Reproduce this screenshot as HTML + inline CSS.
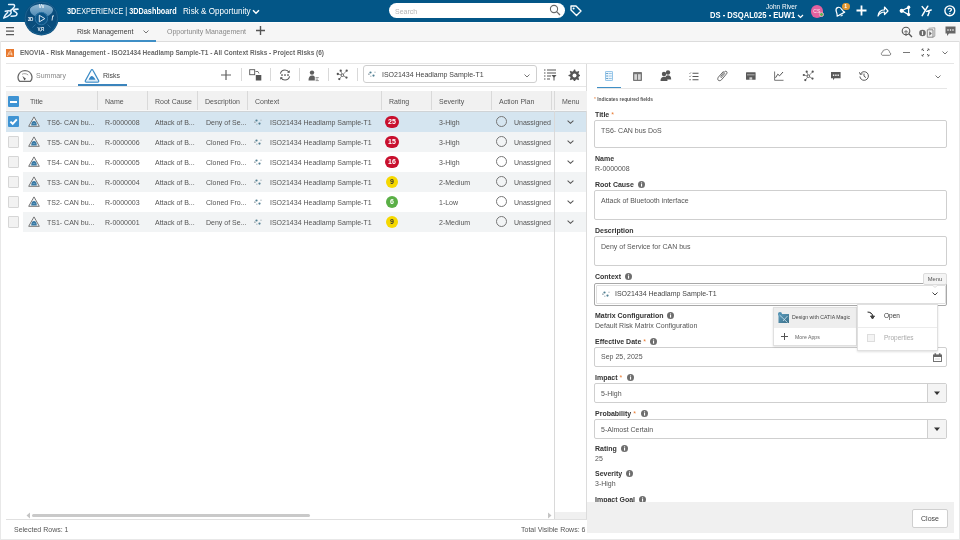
<!DOCTYPE html>
<html><head><meta charset="utf-8">
<style>
*{box-sizing:border-box;margin:0;padding:0}
html,body{width:960px;height:540px;overflow:hidden;background:#fff;}
body{will-change:transform;font-family:"Liberation Sans",sans-serif;color:#3d3d3d}
.a{position:absolute}
#top{left:0;top:0;width:960px;height:22px;background:#035687}
#bar2{left:0;top:22px;width:960px;height:20px;background:#f6f6f6;border-bottom:1px solid #dcdcdc}
.wt{color:#fff;white-space:nowrap}
.hdr{left:6px;top:91px;width:581px;height:20px;background:#f1f1f1}
.col{position:absolute;top:0;height:20px;border-left:1px solid #d9d9d9}
.ht{position:absolute;top:6px;font-size:7px;color:#555;white-space:nowrap}
.row{position:absolute;left:6px;width:549px;height:20px}
.ct{position:absolute;font-size:7px;color:#555;white-space:nowrap}
.lbl{position:absolute;left:595px;font-size:7px;font-weight:bold;color:#333;white-space:nowrap}
.val{position:absolute;left:595px;font-size:7px;color:#555;white-space:nowrap}
.box{position:absolute;left:594px;width:353px;border:1px solid #cfcfcf;border-radius:2px;background:#fff}
.bt{position:absolute;left:6px;font-size:7px;color:#555;white-space:nowrap}
.ic{position:absolute}
</style></head><body>
<!-- TOP BAR -->
<div id="top" class="a">
 <svg class="ic" style="left:0px;top:0px" width="22" height="22" viewBox="0 0 22 22">
  <path d="M8.6 4.6 L13.4 4.6 Q15.3 5.1 14.1 7.1 Q12.6 9.2 10.6 10.5" stroke="#e8f4ff" stroke-width="1.5" fill="none" stroke-linecap="round"/>
  <path d="M5.3 11.2 Q8.5 10.4 10.9 11.1 Q11.9 12.6 10.1 14.5 Q7.2 17.2 3.7 18.1 Q4.6 15.2 7.7 12.2" stroke="#e8f4ff" stroke-width="1.5" fill="none" stroke-linecap="round" stroke-linejoin="round"/>
  <path d="M12.4 9.1 L18.3 9.1" stroke="#e8f4ff" stroke-width="1.2" fill="none" stroke-linecap="round"/>
  <path d="M17.6 9.2 Q13.2 9.6 13.6 10.9 Q16.6 12.4 17 13.6 Q17.1 15.9 14.4 16.1 L11.1 16.3" stroke="#e8f4ff" stroke-width="1.5" fill="none" stroke-linecap="round" stroke-linejoin="round"/>
 </svg>
 <div class="a wt" style="left:67px;top:6.6px;font-size:8.2px;transform:scaleX(0.89);transform-origin:0 0"><b>3D</b>EXPERIENCE | <b>3DDashboard</b></div>
 <div class="a wt" style="left:183px;top:6.6px;font-size:8.2px;transform:scaleX(0.99);transform-origin:0 0">Risk &amp; Opportunity</div>
 <svg class="ic" style="left:252px;top:8.5px" width="8" height="6" viewBox="0 0 8 6"><path d="M1 1.2 L4 4.2 L7 1.2" stroke="#fff" stroke-width="1.5" fill="none"/></svg>
 <div class="a" style="left:389px;top:3px;width:176px;height:15px;border-radius:8px;background:#fff"></div>
 <div class="a" style="left:395px;top:7.5px;font-size:7px;color:#b5b5b5">Search</div>
 <svg class="ic" style="left:549px;top:4px" width="12" height="12" viewBox="0 0 12 12"><circle cx="5" cy="5" r="3.6" stroke="#6a6a6a" stroke-width="1.1" fill="none"/><path d="M7.6 7.6 L11 11" stroke="#6a6a6a" stroke-width="1.3"/></svg>
 <svg class="ic" style="left:569px;top:4px" width="13" height="13" viewBox="0 0 13 13"><path d="M2 2 L7 2 L12 7 L7.5 11.5 L2 6 Z" stroke="#fff" stroke-width="1.4" fill="none" stroke-linejoin="round"/><circle cx="4.6" cy="4.6" r="1" fill="#fff"/></svg>
 <div class="a wt" style="left:766px;top:2.5px;font-size:7px;transform:scaleX(0.93);transform-origin:0 0">John River</div>
 <div class="a wt" style="left:710px;top:10px;font-size:8.3px;font-weight:bold;transform:scaleX(0.915);transform-origin:0 0">DS - DSQAL025 - EUW1</div>
 <svg class="ic" style="left:797px;top:14px" width="7" height="5" viewBox="0 0 7 5"><path d="M1 1 L3.5 3.5 L6 1" stroke="#fff" stroke-width="1.2" fill="none"/></svg>
 <div class="a" style="left:810.5px;top:5px;width:12.5px;height:12.5px;border-radius:50%;background:#e3619f"></div>
 <div class="a" style="left:810.5px;top:8.3px;width:12.5px;font-size:5px;color:#fce6f0;text-align:center">CS</div>
 <div class="a" style="left:818.5px;top:12px;width:5px;height:5px;border-radius:50%;background:#5cb84f;border:0.8px solid #f2a0c8"></div>
 <svg class="ic" style="left:833px;top:5px" width="13" height="13" viewBox="0 0 13 13"><g transform="rotate(-28 6.5 6.5)"><path d="M2.2 9.5 L10.8 9.5 C9.8 8.6 9.6 6.8 9.4 5.2 C9.1 3.2 7.9 2.1 6.5 2.1 C5.1 2.1 3.9 3.2 3.6 5.2 C3.4 6.8 3.2 8.6 2.2 9.5 Z" stroke="#fff" stroke-width="1.2" fill="none" stroke-linejoin="round"/><path d="M5.4 10.6 Q6.5 11.9 7.6 10.6" stroke="#fff" stroke-width="1.1" fill="none"/></g></svg>
 <div class="a" style="left:842px;top:2.5px;width:7.5px;height:7.5px;border-radius:50%;background:#e0962f"></div>
 <div class="a" style="left:842px;top:3px;width:7.5px;font-size:5px;color:#fff;text-align:center;font-weight:bold">1</div>
 <svg class="ic" style="left:856px;top:5px" width="11" height="11" viewBox="0 0 11 11"><path d="M5.5 0.5 V10.5 M0.5 5.5 H10.5" stroke="#fff" stroke-width="1.8"/></svg>
 <svg class="ic" style="left:877px;top:5px" width="12" height="12" viewBox="0 0 12 12"><path d="M1 11 C1.5 6.5 4 4.8 7.5 4.8 V2 L11 6 L7.5 9.5 V7 C4.8 7 2.8 8 1 11 Z" stroke="#fff" stroke-width="1.2" fill="none" stroke-linejoin="round"/></svg>
 <svg class="ic" style="left:899px;top:5px" width="12" height="12" viewBox="0 0 12 12"><path d="M9.6 2.2 L2.8 5.8 L9.6 9.6 Z" stroke="#fff" stroke-width="1.3" fill="none" stroke-linejoin="round"/><circle cx="9.7" cy="2.2" r="1.6" fill="#fff"/><circle cx="2.7" cy="5.8" r="2.1" fill="#fff"/><circle cx="9.7" cy="9.6" r="1.6" fill="#fff"/></svg>
 <svg class="ic" style="left:921px;top:4px" width="12" height="13" viewBox="0 0 12 13"><path d="M1.2 2.6 L4.2 6.3 M6.8 2.2 L1.2 11.6 M8.8 6.6 L6.9 11.6 M5.6 7.4 L10.2 6" stroke="#fff" stroke-width="1.5" fill="none" stroke-linecap="round"/></svg>
 <svg class="ic" style="left:943.5px;top:5px" width="12" height="12" viewBox="0 0 12 12"><circle cx="5.8" cy="5.8" r="4.9" stroke="#fff" stroke-width="1.4" fill="none"/><path d="M4.1 4.6 C4.1 3 7.5 3 7.5 4.6 C7.5 5.8 5.8 5.8 5.8 7.1" stroke="#fff" stroke-width="1.3" fill="none"/><circle cx="5.8" cy="8.7" r="0.8" fill="#fff"/></svg>
</div>
<!-- BAR 2 -->
<div id="bar2" class="a">
 <div class="a" style="left:0;top:0;width:960px;height:1px;background:#fdfdfd"></div>
 <svg class="ic" style="left:6px;top:5px" width="8" height="9" viewBox="0 0 8 9"><path d="M0 0.6 H8 M0 4.1 H8 M0 7.6 H8" stroke="#595959" stroke-width="1.2"/></svg>
 <div class="a" style="left:77px;top:6px;font-size:7px;color:#3d3d3d">Risk Management</div>
 <svg class="ic" style="left:143px;top:8px" width="6" height="4" viewBox="0 0 6 4"><path d="M0.5 0.5 L3 3 L5.5 0.5" stroke="#666" stroke-width="0.9" fill="none"/></svg>
 <div class="a" style="left:70px;top:18px;width:86px;height:2px;background:#3f8fc6"></div>
 <div class="a" style="left:167px;top:6px;font-size:7px;color:#888">Opportunity Management</div>
 <svg class="ic" style="left:256px;top:4px" width="9" height="9" viewBox="0 0 9 9"><path d="M4.5 0 V9 M0 4.5 H9" stroke="#555" stroke-width="1.4"/></svg>
 <svg class="ic" style="left:901px;top:4px" width="12" height="12" viewBox="0 0 12 12"><circle cx="5" cy="5" r="3.8" stroke="#555" stroke-width="1.1" fill="none"/><path d="M7.8 7.8 L11 11" stroke="#555" stroke-width="1.3"/><path d="M3 6.5 L5 4.5 L7 6.5 M5 5 V10" stroke="#555" stroke-width="0.9" fill="none"/></svg>
 <svg class="ic" style="left:919px;top:5px" width="18" height="12" viewBox="0 0 18 12"><circle cx="3.5" cy="6" r="3.3" fill="#6a6a6a"/><rect x="2.9" y="4" width="1.2" height="4" rx="0.6" fill="#f6f6f6"/><path d="M8.3 2.8 H14 V10.2 H8.3 Z" stroke="#7a7a7a" stroke-width="0.9" fill="#f0f0f0"/><path d="M9.5 1.3 L15.8 0.8 V9.2 L14 10.2" stroke="#8a8a8a" stroke-width="0.8" fill="none"/><path d="M10.3 4.3 L12.8 6.5 L10.3 8.7 Z" fill="#666"/></svg>
 <svg class="ic" style="left:945px;top:4px" width="11" height="11" viewBox="0 0 11 11"><path d="M0.5 0.5 H10.5 V7.5 H4 L2 10 V7.5 H0.5 Z" fill="#666"/><circle cx="3" cy="4" r="0.8" fill="#fff"/><circle cx="5.5" cy="4" r="0.8" fill="#fff"/><circle cx="8" cy="4" r="0.8" fill="#fff"/></svg>
</div>
<!-- COMPASS -->
<svg class="ic" style="left:23px;top:0px" width="38" height="38" viewBox="0 0 38 38">
 <defs><linearGradient id="cg" x1="0" y1="0" x2="0" y2="1"><stop offset="0" stop-color="#a9cbe2"/><stop offset="1" stop-color="#5d97c0"/></linearGradient></defs>
 <circle cx="18.4" cy="18.3" r="17.1" fill="#0a4d7c"/>
 <circle cx="18.4" cy="18.3" r="16.3" fill="none" stroke="#1d6593" stroke-width="0.9"/>
 <path d="M7 9 C9 2.5 28 2.5 30 9 C30.5 12 27 15.5 24.5 16 C23 13.5 21 12.3 18.4 12.3 C15.8 12.3 13.8 13.5 12.3 16 C9.5 15.5 6.5 12 7 9 Z" fill="url(#cg)" opacity="0.85"/>
 <circle cx="18.4" cy="18.6" r="6.2" fill="#0b5487" stroke="#2f77a8" stroke-width="1"/>
 <path d="M16.3 15.3 L21.8 18.6 L16.3 21.9 Z" stroke="#dbe9f4" stroke-width="1" fill="none" stroke-linejoin="round"/>
 <text x="4.8" y="20.6" font-size="4.6" font-weight="bold" fill="#e6eef5" font-family="Liberation Sans" letter-spacing="-0.3">3D</text>
 <text x="14.6" y="30.6" font-size="4.6" font-weight="bold" fill="#e6eef5" font-family="Liberation Sans" letter-spacing="-0.3">V,R</text>
 <text x="15.8" y="8.2" font-size="4.6" font-weight="bold" fill="#f2f7fb" font-family="Liberation Sans" font-style="italic">Vs</text>
 <path d="M29.8 15.5 L29 20.5 M29.5 16.5 L31 15.6" stroke="#e6eef5" stroke-width="0.9"/>
 <path d="M9.5 27.5 L12.5 24.5 M27.5 27.5 L24.5 24.5" stroke="#3f80ad" stroke-width="0.7"/>
</svg>

<!-- FRAME -->
<div class="a" style="left:0;top:41px;width:960px;height:499px;border:1px solid #e8e8e8;border-top:none"></div>
<div class="a" style="left:6px;top:49px;width:8px;height:8px;background:#e8792f"></div>
<svg class="ic" style="left:6px;top:49px" width="8" height="8" viewBox="0 0 8 8"><path d="M1.5 7 L3.5 2.5 M3 5 H6.5 M4.5 1.5 L6 6.5" stroke="#fde3cc" stroke-width="0.8" fill="none"/></svg>
<div class="a" style="left:20px;top:49px;font-size:6.5px;font-weight:bold;color:#686868;white-space:nowrap">ENOVIA - Risk Management - ISO21434 Headlamp Sample-T1 - All Context Risks - Project Risks (6)</div>
<svg class="ic" style="left:880px;top:48px" width="12" height="8" viewBox="0 0 12 8"><path d="M2.5 7.3 H9.5 C11 7.3 11.3 4.8 9.6 4.5 C9.5 2 6.8 0.5 5 2 C4 1.6 2.6 2.5 2.9 3.8 C0.8 4.3 1 7.3 2.5 7.3 Z" stroke="#666" stroke-width="0.8" fill="none"/></svg>
<div class="a" style="left:903px;top:52px;width:7px;height:1.2px;background:#777"></div>
<svg class="ic" style="left:921px;top:48px" width="9" height="9" viewBox="0 0 9 9"><path d="M1 1 L3 3 M8 1 L6 3 M1 8 L3 6 M8 8 L6 6" stroke="#666" stroke-width="1"/><path d="M1 1 h1.5 M1 1 v1.5 M8 1 h-1.5 M8 1 v1.5 M1 8 h1.5 M1 8 v-1.5 M8 8 h-1.5 M8 8 v-1.5" stroke="#666" stroke-width="0.9"/></svg>
<svg class="ic" style="left:942px;top:51px" width="6" height="4" viewBox="0 0 6 4"><path d="M0.5 0.5 L3 3 L5.5 0.5" stroke="#666" stroke-width="0.9" fill="none"/></svg>
<div class="a" style="left:6px;top:63px;width:948px;height:1px;background:#e6e6e6"></div>
<!-- LEFT TABS -->
<svg class="ic" style="left:17px;top:69px" width="16" height="14" viewBox="0 0 16 14"><path d="M2.6 12.3 C1.2 11 0.8 9.2 1.1 7.3 C1.7 3.9 4.6 1.6 8 1.6 C11.4 1.6 14.3 3.9 14.9 7.3 C15.2 9.2 14.8 11 13.4 12.3 Z" stroke="#6a6a6a" stroke-width="1.3" fill="none" stroke-linejoin="round"/><path d="M5 5.3 C6.6 4.3 9.4 4.4 11.2 6" stroke="#8a8a8a" stroke-width="0.8" fill="none"/><path d="M7.4 11.6 L5.4 6.9 L9 9.8 Z" fill="#555"/></svg>
<div class="a" style="left:36px;top:72px;font-size:7px;color:#888">Summary</div>
<svg class="ic" style="left:84px;top:68px" width="16" height="16" viewBox="0 0 16 16"><path d="M8 1.6 C8.4 1.6 8.7 1.8 8.9 2.2 L14.6 12.6 C15 13.4 14.6 14.2 13.7 14.2 H2.3 C1.4 14.2 1 13.4 1.4 12.6 L7.1 2.2 C7.3 1.8 7.6 1.6 8 1.6 Z" stroke="#3d8cc6" stroke-width="1.2" fill="#fbfdff"/><path d="M4.6 11.8 C5.3 10.3 6.3 8.3 7.6 8 C8.6 7.8 9.3 8.8 10 9.4 C10.6 9.9 11.2 10.6 11.5 11.8 Z" fill="#3584c2"/><path d="M2.6 12.9 H13.4" stroke="#a9cdea" stroke-width="0.7"/></svg>
<div class="a" style="left:103px;top:72px;font-size:7px;color:#444">Risks</div>
<div class="a" style="left:78px;top:84px;width:49px;height:2px;background:#3b84bc"></div>
<div class="a" style="left:6px;top:86px;width:581px;height:1px;background:#e6e6e6"></div>
<!-- TOOLBAR -->
<svg class="ic" style="left:221px;top:70px" width="10" height="10" viewBox="0 0 10 10"><path d="M5 0 V10 M0 5 H10" stroke="#606060" stroke-width="1.2"/></svg>
<div class="a" style="left:241px;top:68px;width:1px;height:13px;background:#d9d9d9"></div>
<svg class="ic" style="left:249px;top:69px" width="13" height="12" viewBox="0 0 13 12"><rect x="0.7" y="0.7" width="5" height="5" stroke="#555" stroke-width="0.9" fill="none"/><rect x="6.8" y="6" width="5.5" height="5.5" fill="#555"/><path d="M6.5 2.5 L9 2.5 L10 4.5" stroke="#555" stroke-width="0.8" fill="none"/></svg>
<div class="a" style="left:270px;top:68px;width:1px;height:13px;background:#d9d9d9"></div>
<svg class="ic" style="left:278.5px;top:69px" width="12" height="12" viewBox="0 0 12 12"><path d="M1.4 4.6 C2 2.4 3.9 1 6 1 C7.7 1 9.2 1.9 10 3.3" stroke="#5a5a5a" stroke-width="1.1" fill="none"/><path d="M10.6 7.4 C10 9.6 8.1 11 6 11 C4.3 11 2.8 10.1 2 8.7" stroke="#5a5a5a" stroke-width="1.1" fill="none"/><path d="M10.9 1.3 L10.6 4 L8.1 3.4 Z" fill="#5a5a5a"/><path d="M1.1 10.7 L1.4 8 L3.9 8.6 Z" fill="#5a5a5a"/><rect x="2.2" y="5.3" width="1.6" height="1.5" fill="#5a5a5a"/><rect x="5.2" y="5.3" width="1.6" height="1.5" fill="#5a5a5a"/><rect x="8.2" y="5.3" width="1.6" height="1.5" fill="#5a5a5a"/></svg>
<div class="a" style="left:299px;top:68px;width:1px;height:13px;background:#d9d9d9"></div>
<svg class="ic" style="left:307.5px;top:69.5px" width="12" height="12" viewBox="0 0 12 12"><circle cx="4" cy="2.6" r="2.2" fill="#5e5e5e"/><path d="M0.5 10.6 C0.5 7.3 1.8 5.6 4 5.6 C5.3 5.6 6.2 6.1 6.8 7 L6.8 10.6 Z" fill="#5e5e5e"/><path d="M7.6 7.6 H10.8 M7.6 9.1 H10 M7.6 10.6 H10.8" stroke="#7a7a7a" stroke-width="0.8"/></svg>
<div class="a" style="left:328px;top:68px;width:1px;height:13px;background:#d9d9d9"></div>
<svg class="ic" style="left:336px;top:69px" width="12" height="12" viewBox="0 0 12 12"><path d="M6.4 6.2 L4.7 1.7 M6.4 6.2 L10.7 1.7 M6.4 6.2 L1.8 5 M6.4 6.2 L3.3 10.1 M6.4 6.2 L10.5 8.6" stroke="#666" stroke-width="0.7"/><circle cx="4.7" cy="1.7" r="1.15" fill="#555"/><circle cx="10.7" cy="1.7" r="1.15" fill="#555"/><circle cx="1.8" cy="5" r="1.15" fill="#555"/><circle cx="3.3" cy="10.1" r="1.15" fill="#555"/><circle cx="10.5" cy="8.6" r="1.15" fill="#555"/><circle cx="6.4" cy="6.2" r="1.3" stroke="#555" stroke-width="0.9" fill="#fff"/></svg>
<div class="a" style="left:357px;top:68px;width:1px;height:13px;background:#d9d9d9"></div>
<div class="a" style="left:363px;top:65px;width:174px;height:18px;border:1px solid #cfcfcf;border-radius:3px;background:#fff"></div>
<svg class="ic" style="left:368px;top:70px" width="9" height="8" viewBox="0 0 9 8"><circle cx="2.5" cy="2.5" r="1.1" fill="#4f7f92"/><circle cx="5.5" cy="5.6" r="1.1" fill="#4f7f92"/><circle cx="0.9" cy="4.2" r="0.9" fill="#a9b4bb"/><circle cx="7" cy="2.3" r="0.8" fill="#b9c3c9"/><circle cx="2.8" cy="6.3" r="0.8" fill="#b9c3c9"/></svg>
<div class="a" style="left:382px;top:70.5px;font-size:7px;color:#444;white-space:nowrap">ISO21434 Headlamp Sample-T1</div>
<svg class="ic" style="left:524px;top:74px" width="6" height="4" viewBox="0 0 6 4"><path d="M0.5 0.5 L3 3 L5.5 0.5" stroke="#666" stroke-width="0.9" fill="none"/></svg>
<svg class="ic" style="left:544px;top:69px" width="13" height="12" viewBox="0 0 13 12"><path d="M0 1 H1.5 M3 1 H12 M0 4 H1.5 M3 4 H12 M0 7 H1.5 M3 7 H7 M0 10 H1.5 M3 10 H6" stroke="#555" stroke-width="1.1"/><path d="M7.5 6 H12.5 L10.5 8.5 V11.5 H9.5 V8.5 Z" fill="#555"/></svg>
<svg class="ic" style="left:568px;top:69px" width="12" height="12" viewBox="0 0 12 12"><path d="M6 0.5 L7.2 0.5 L7.6 2.2 L9 2.8 L10.5 1.9 L11.3 2.8 L10.4 4.3 L11 5.6 L12 6 L12 7 L10.9 7.4 L10.4 8.8 L11.2 10.2 L10.2 11.2 L8.8 10.3 L7.5 10.9 L7.1 12 L5.9 12 L5.5 10.9 L4.2 10.3 L2.8 11.2 L1.8 10.2 L2.6 8.8 L2.1 7.4 L0.5 7 L0.5 5.9 L2.1 5.5 L2.6 4.2 L1.7 2.8 L2.7 1.8 L4.1 2.7 L5.4 2.1 Z" fill="#555"/><circle cx="6.5" cy="6.5" r="2" fill="#fff"/></svg>
<div class="a" style="left:586px;top:64px;width:1px;height:455px;background:#dcdcdc"></div>

<!-- GRID HEADER -->
<div class="a hdr">
 <div class="col" style="left:91px"></div>
 <div class="col" style="left:141px"></div>
 <div class="col" style="left:191px"></div>
 <div class="col" style="left:241px"></div>
 <div class="col" style="left:375px"></div>
 <div class="col" style="left:425px"></div>
 <div class="col" style="left:485px"></div>
 <div class="col" style="left:545px"></div>
 <div class="col" style="left:548px"></div>
</div>
<div class="a" style="left:8px;top:96px;width:11px;height:11px;background:#3e93d3;border-radius:1px"></div>
<div class="a" style="left:10px;top:100.5px;width:7px;height:2px;background:#fff"></div>
<div class="a ht" style="top:98px;left:30px">Title</div>
<div class="a ht" style="top:98px;left:105px">Name</div>
<div class="a ht" style="top:98px;left:155px">Root Cause</div>
<div class="a ht" style="top:98px;left:205px">Description</div>
<div class="a ht" style="top:98px;left:255px">Context</div>
<div class="a ht" style="top:98px;left:389px">Rating</div>
<div class="a ht" style="top:98px;left:439px">Severity</div>
<div class="a ht" style="top:98px;left:499px">Action Plan</div>
<div class="a ht" style="top:98px;left:562px">Menu</div>
<!-- ROWS -->
<div class="a" style="left:6px;top:111px;width:580px;height:21px;background:#d5e5f0"></div>
<div class="a" style="left:6px;top:110px;width:580px;height:1px;background:#f7f7f7"></div>
<div class="a" style="left:6px;top:111px;width:580px;height:1px;background:#cfd3d6"></div>
<div class="a" style="left:8px;top:116px;width:11px;height:11px;background:#3e93d3;border-radius:1px"></div>
<svg class="ic" style="left:9px;top:117px" width="9" height="9" viewBox="0 0 9 9"><path d="M1.4 4.6 L3.7 6.8 L7.8 2.3" stroke="#fff" stroke-width="2" fill="none"/></svg>
<svg class="ic" style="left:28px;top:116px" width="12" height="11" viewBox="0 0 12 11"><path d="M6 0.9 L11.3 10.3 H0.7 Z" stroke="#747474" stroke-width="1" fill="#f4f6f8" stroke-linejoin="round"/><path d="M6 2.8 L9.6 9.2 H2.4 Z" stroke="#e2e6ea" stroke-width="0.5" fill="none"/><path d="M3.2 9.4 C3.2 6.6 4.5 5.1 6 5.1 C7.5 5.1 8.8 6.6 8.8 9.4 Z" fill="#3878a2"/><path d="M4.8 7.6 H7.2" stroke="#7fb3d3" stroke-width="0.6"/></svg>
<div class="a ct" style="left:47px;top:118.5px">TS6- CAN bu...</div>
<div class="a ct" style="left:105px;top:118.5px">R-0000008</div>
<div class="a ct" style="left:155px;top:118.5px">Attack of B...</div>
<div class="a ct" style="left:206px;top:118.5px">Deny of Se...</div>
<svg class="ic" style="left:254px;top:118px" width="9" height="8" viewBox="0 0 9 8"><circle cx="2.5" cy="2.5" r="1.1" fill="#4f7f92"/><circle cx="5.5" cy="5.6" r="1.1" fill="#4f7f92"/><circle cx="0.9" cy="4.2" r="0.9" fill="#a9b4bb"/><circle cx="7" cy="2.3" r="0.8" fill="#b9c3c9"/><circle cx="2.8" cy="6.3" r="0.8" fill="#b9c3c9"/></svg>
<div class="a ct" style="left:270px;top:118.5px">ISO21434 Headlamp Sample-T1</div>
<div class="a" style="left:385px;top:116px;width:14px;height:12px;border-radius:6px;background:#c8102e;color:#fff;font-size:7px;font-weight:bold;text-align:center;line-height:12px">25</div>
<div class="a ct" style="left:439px;top:118.5px">3-High</div>
<div class="a" style="left:496px;top:116px;width:11px;height:11px;border-radius:50%;border:1px solid #777"></div>
<div class="a ct" style="left:514px;top:118.5px">Unassigned</div>
<svg class="ic" style="left:567px;top:120px" width="7" height="4" viewBox="0 0 7 4"><path d="M0.6 0.6 L3.5 3.3 L6.4 0.6" stroke="#555" stroke-width="1.05" fill="none"/></svg>
<div class="a" style="left:23px;top:132px;width:563px;height:20px;background:#f2f4f5"></div>
<div class="a" style="left:8px;top:136px;width:11px;height:12px;background:#f2f2f2;border:1px solid #d6d6d6;border-radius:1px"></div>
<svg class="ic" style="left:28px;top:136px" width="12" height="11" viewBox="0 0 12 11"><path d="M6 0.9 L11.3 10.3 H0.7 Z" stroke="#747474" stroke-width="1" fill="#f4f6f8" stroke-linejoin="round"/><path d="M6 2.8 L9.6 9.2 H2.4 Z" stroke="#e2e6ea" stroke-width="0.5" fill="none"/><path d="M3.2 9.4 C3.2 6.6 4.5 5.1 6 5.1 C7.5 5.1 8.8 6.6 8.8 9.4 Z" fill="#3878a2"/><path d="M4.8 7.6 H7.2" stroke="#7fb3d3" stroke-width="0.6"/></svg>
<div class="a ct" style="left:47px;top:138.5px">TS5- CAN bu...</div>
<div class="a ct" style="left:105px;top:138.5px">R-0000006</div>
<div class="a ct" style="left:155px;top:138.5px">Attack of B...</div>
<div class="a ct" style="left:206px;top:138.5px">Cloned Fro...</div>
<svg class="ic" style="left:254px;top:138px" width="9" height="8" viewBox="0 0 9 8"><circle cx="2.5" cy="2.5" r="1.1" fill="#4f7f92"/><circle cx="5.5" cy="5.6" r="1.1" fill="#4f7f92"/><circle cx="0.9" cy="4.2" r="0.9" fill="#a9b4bb"/><circle cx="7" cy="2.3" r="0.8" fill="#b9c3c9"/><circle cx="2.8" cy="6.3" r="0.8" fill="#b9c3c9"/></svg>
<div class="a ct" style="left:270px;top:138.5px">ISO21434 Headlamp Sample-T1</div>
<div class="a" style="left:385px;top:136px;width:14px;height:12px;border-radius:6px;background:#c8102e;color:#fff;font-size:7px;font-weight:bold;text-align:center;line-height:12px">15</div>
<div class="a ct" style="left:439px;top:138.5px">3-High</div>
<div class="a" style="left:496px;top:136px;width:11px;height:11px;border-radius:50%;border:1px solid #777"></div>
<div class="a ct" style="left:514px;top:138.5px">Unassigned</div>
<svg class="ic" style="left:567px;top:140px" width="7" height="4" viewBox="0 0 7 4"><path d="M0.6 0.6 L3.5 3.3 L6.4 0.6" stroke="#555" stroke-width="1.05" fill="none"/></svg>
<div class="a" style="left:8px;top:156px;width:11px;height:12px;background:#f2f2f2;border:1px solid #d6d6d6;border-radius:1px"></div>
<svg class="ic" style="left:28px;top:156px" width="12" height="11" viewBox="0 0 12 11"><path d="M6 0.9 L11.3 10.3 H0.7 Z" stroke="#747474" stroke-width="1" fill="#f4f6f8" stroke-linejoin="round"/><path d="M6 2.8 L9.6 9.2 H2.4 Z" stroke="#e2e6ea" stroke-width="0.5" fill="none"/><path d="M3.2 9.4 C3.2 6.6 4.5 5.1 6 5.1 C7.5 5.1 8.8 6.6 8.8 9.4 Z" fill="#3878a2"/><path d="M4.8 7.6 H7.2" stroke="#7fb3d3" stroke-width="0.6"/></svg>
<div class="a ct" style="left:47px;top:158.5px">TS4- CAN bu...</div>
<div class="a ct" style="left:105px;top:158.5px">R-0000005</div>
<div class="a ct" style="left:155px;top:158.5px">Attack of B...</div>
<div class="a ct" style="left:206px;top:158.5px">Cloned Fro...</div>
<svg class="ic" style="left:254px;top:158px" width="9" height="8" viewBox="0 0 9 8"><circle cx="2.5" cy="2.5" r="1.1" fill="#4f7f92"/><circle cx="5.5" cy="5.6" r="1.1" fill="#4f7f92"/><circle cx="0.9" cy="4.2" r="0.9" fill="#a9b4bb"/><circle cx="7" cy="2.3" r="0.8" fill="#b9c3c9"/><circle cx="2.8" cy="6.3" r="0.8" fill="#b9c3c9"/></svg>
<div class="a ct" style="left:270px;top:158.5px">ISO21434 Headlamp Sample-T1</div>
<div class="a" style="left:385px;top:156px;width:14px;height:12px;border-radius:6px;background:#c8102e;color:#fff;font-size:7px;font-weight:bold;text-align:center;line-height:12px">16</div>
<div class="a ct" style="left:439px;top:158.5px">3-High</div>
<div class="a" style="left:496px;top:156px;width:11px;height:11px;border-radius:50%;border:1px solid #777"></div>
<div class="a ct" style="left:514px;top:158.5px">Unassigned</div>
<svg class="ic" style="left:567px;top:160px" width="7" height="4" viewBox="0 0 7 4"><path d="M0.6 0.6 L3.5 3.3 L6.4 0.6" stroke="#555" stroke-width="1.05" fill="none"/></svg>
<div class="a" style="left:23px;top:172px;width:563px;height:20px;background:#f2f4f5"></div>
<div class="a" style="left:8px;top:176px;width:11px;height:12px;background:#f2f2f2;border:1px solid #d6d6d6;border-radius:1px"></div>
<svg class="ic" style="left:28px;top:176px" width="12" height="11" viewBox="0 0 12 11"><path d="M6 0.9 L11.3 10.3 H0.7 Z" stroke="#747474" stroke-width="1" fill="#f4f6f8" stroke-linejoin="round"/><path d="M6 2.8 L9.6 9.2 H2.4 Z" stroke="#e2e6ea" stroke-width="0.5" fill="none"/><path d="M3.2 9.4 C3.2 6.6 4.5 5.1 6 5.1 C7.5 5.1 8.8 6.6 8.8 9.4 Z" fill="#3878a2"/><path d="M4.8 7.6 H7.2" stroke="#7fb3d3" stroke-width="0.6"/></svg>
<div class="a ct" style="left:47px;top:178.5px">TS3- CAN bu...</div>
<div class="a ct" style="left:105px;top:178.5px">R-0000004</div>
<div class="a ct" style="left:155px;top:178.5px">Attack of B...</div>
<div class="a ct" style="left:206px;top:178.5px">Cloned Fro...</div>
<svg class="ic" style="left:254px;top:178px" width="9" height="8" viewBox="0 0 9 8"><circle cx="2.5" cy="2.5" r="1.1" fill="#4f7f92"/><circle cx="5.5" cy="5.6" r="1.1" fill="#4f7f92"/><circle cx="0.9" cy="4.2" r="0.9" fill="#a9b4bb"/><circle cx="7" cy="2.3" r="0.8" fill="#b9c3c9"/><circle cx="2.8" cy="6.3" r="0.8" fill="#b9c3c9"/></svg>
<div class="a ct" style="left:270px;top:178.5px">ISO21434 Headlamp Sample-T1</div>
<div class="a" style="left:386px;top:176px;width:12px;height:12px;border-radius:6px;background:#f5d800;color:#333;font-size:7px;font-weight:bold;text-align:center;line-height:12px">9</div>
<div class="a ct" style="left:439px;top:178.5px">2-Medium</div>
<div class="a" style="left:496px;top:176px;width:11px;height:11px;border-radius:50%;border:1px solid #777"></div>
<div class="a ct" style="left:514px;top:178.5px">Unassigned</div>
<svg class="ic" style="left:567px;top:180px" width="7" height="4" viewBox="0 0 7 4"><path d="M0.6 0.6 L3.5 3.3 L6.4 0.6" stroke="#555" stroke-width="1.05" fill="none"/></svg>
<div class="a" style="left:8px;top:196px;width:11px;height:12px;background:#f2f2f2;border:1px solid #d6d6d6;border-radius:1px"></div>
<svg class="ic" style="left:28px;top:196px" width="12" height="11" viewBox="0 0 12 11"><path d="M6 0.9 L11.3 10.3 H0.7 Z" stroke="#747474" stroke-width="1" fill="#f4f6f8" stroke-linejoin="round"/><path d="M6 2.8 L9.6 9.2 H2.4 Z" stroke="#e2e6ea" stroke-width="0.5" fill="none"/><path d="M3.2 9.4 C3.2 6.6 4.5 5.1 6 5.1 C7.5 5.1 8.8 6.6 8.8 9.4 Z" fill="#3878a2"/><path d="M4.8 7.6 H7.2" stroke="#7fb3d3" stroke-width="0.6"/></svg>
<div class="a ct" style="left:47px;top:198.5px">TS2- CAN bu...</div>
<div class="a ct" style="left:105px;top:198.5px">R-0000003</div>
<div class="a ct" style="left:155px;top:198.5px">Attack of B...</div>
<div class="a ct" style="left:206px;top:198.5px">Cloned Fro...</div>
<svg class="ic" style="left:254px;top:198px" width="9" height="8" viewBox="0 0 9 8"><circle cx="2.5" cy="2.5" r="1.1" fill="#4f7f92"/><circle cx="5.5" cy="5.6" r="1.1" fill="#4f7f92"/><circle cx="0.9" cy="4.2" r="0.9" fill="#a9b4bb"/><circle cx="7" cy="2.3" r="0.8" fill="#b9c3c9"/><circle cx="2.8" cy="6.3" r="0.8" fill="#b9c3c9"/></svg>
<div class="a ct" style="left:270px;top:198.5px">ISO21434 Headlamp Sample-T1</div>
<div class="a" style="left:386px;top:196px;width:12px;height:12px;border-radius:6px;background:#5aaf46;color:#fff;font-size:7px;font-weight:bold;text-align:center;line-height:12px">6</div>
<div class="a ct" style="left:439px;top:198.5px">1-Low</div>
<div class="a" style="left:496px;top:196px;width:11px;height:11px;border-radius:50%;border:1px solid #777"></div>
<div class="a ct" style="left:514px;top:198.5px">Unassigned</div>
<svg class="ic" style="left:567px;top:200px" width="7" height="4" viewBox="0 0 7 4"><path d="M0.6 0.6 L3.5 3.3 L6.4 0.6" stroke="#555" stroke-width="1.05" fill="none"/></svg>
<div class="a" style="left:23px;top:212px;width:563px;height:20px;background:#f2f4f5"></div>
<div class="a" style="left:8px;top:216px;width:11px;height:12px;background:#f2f2f2;border:1px solid #d6d6d6;border-radius:1px"></div>
<svg class="ic" style="left:28px;top:216px" width="12" height="11" viewBox="0 0 12 11"><path d="M6 0.9 L11.3 10.3 H0.7 Z" stroke="#747474" stroke-width="1" fill="#f4f6f8" stroke-linejoin="round"/><path d="M6 2.8 L9.6 9.2 H2.4 Z" stroke="#e2e6ea" stroke-width="0.5" fill="none"/><path d="M3.2 9.4 C3.2 6.6 4.5 5.1 6 5.1 C7.5 5.1 8.8 6.6 8.8 9.4 Z" fill="#3878a2"/><path d="M4.8 7.6 H7.2" stroke="#7fb3d3" stroke-width="0.6"/></svg>
<div class="a ct" style="left:47px;top:218.5px">TS1- CAN bu...</div>
<div class="a ct" style="left:105px;top:218.5px">R-0000001</div>
<div class="a ct" style="left:155px;top:218.5px">Attack of B...</div>
<div class="a ct" style="left:206px;top:218.5px">Deny of Se...</div>
<svg class="ic" style="left:254px;top:218px" width="9" height="8" viewBox="0 0 9 8"><circle cx="2.5" cy="2.5" r="1.1" fill="#4f7f92"/><circle cx="5.5" cy="5.6" r="1.1" fill="#4f7f92"/><circle cx="0.9" cy="4.2" r="0.9" fill="#a9b4bb"/><circle cx="7" cy="2.3" r="0.8" fill="#b9c3c9"/><circle cx="2.8" cy="6.3" r="0.8" fill="#b9c3c9"/></svg>
<div class="a ct" style="left:270px;top:218.5px">ISO21434 Headlamp Sample-T1</div>
<div class="a" style="left:386px;top:216px;width:12px;height:12px;border-radius:6px;background:#f5d800;color:#333;font-size:7px;font-weight:bold;text-align:center;line-height:12px">9</div>
<div class="a ct" style="left:439px;top:218.5px">2-Medium</div>
<div class="a" style="left:496px;top:216px;width:11px;height:11px;border-radius:50%;border:1px solid #777"></div>
<div class="a ct" style="left:514px;top:218.5px">Unassigned</div>
<svg class="ic" style="left:567px;top:220px" width="7" height="4" viewBox="0 0 7 4"><path d="M0.6 0.6 L3.5 3.3 L6.4 0.6" stroke="#555" stroke-width="1.05" fill="none"/></svg>
<div class="a" style="left:554px;top:111px;width:1px;height:408px;background:#d9d9d9"></div>
<!-- FOOTER LEFT -->
<div class="a" style="left:555px;top:512px;width:31px;height:7px;background:#f0f0f0"></div>
<div class="a" style="left:32px;top:514px;width:278px;height:3px;border-radius:2px;background:#c9c9c9"></div>
<svg class="ic" style="left:26px;top:512px" width="5" height="7" viewBox="0 0 5 7"><path d="M4 0.5 L0.5 3.5 L4 6.5 Z" fill="#c4c4c4"/></svg>
<svg class="ic" style="left:547px;top:512px" width="5" height="7" viewBox="0 0 5 7"><path d="M1 0.5 L4.5 3.5 L1 6.5 Z" fill="#c4c4c4"/></svg>
<div class="a" style="left:6px;top:519px;width:581px;height:1px;background:#e0e0e0"></div>
<div class="a bt" style="left:14px;top:526px">Selected Rows: 1</div>
<div class="a bt" style="left:521px;top:526px">Total Visible Rows: 6</div>
<!-- RIGHT PANEL -->
<div class="a" style="left:587px;top:63px;width:367px;height:1px;background:#e6e6e6"></div>
<!-- tab icons -->
<svg class="ic" style="left:605px;top:71px" width="8" height="10" viewBox="0 0 8 10"><rect x="0.4" y="0.4" width="7.2" height="9.2" rx="0.8" stroke="#6fb0e0" stroke-width="0.8" fill="#eef6fc"/><path d="M1.3 2.5 H2.8 M1.3 5 H2.8 M1.3 7.5 H2.8" stroke="#2f7fb8" stroke-width="0.9"/><path d="M3.6 2.5 H6.8 M3.6 5 H6.8 M3.6 7.5 H6.8" stroke="#8fbfe3" stroke-width="0.9"/></svg>
<div class="a" style="left:597px;top:87px;width:24px;height:2px;background:#3f8fc6"></div>
<svg class="ic" style="left:633px;top:72px" width="9" height="9" viewBox="0 0 9 9"><rect x="0" y="0" width="9" height="9" rx="0.8" fill="#777"/><rect x="1.3" y="2.2" width="2.7" height="5.6" fill="#d6d6d6"/><rect x="5" y="2.2" width="2.7" height="5.6" fill="#d6d6d6"/></svg>
<svg class="ic" style="left:660px;top:70px" width="12" height="11" viewBox="0 0 12 11"><circle cx="8" cy="2.5" r="2.2" fill="#555"/><path d="M5 9.5 C5 6.5 6.3 5.3 8 5.3 C9.8 5.3 11.2 6.5 11.2 9.5 Z" fill="#555"/><circle cx="4" cy="4" r="2.2" fill="#555"/><path d="M0.5 11 C0.5 8 2 6.8 4 6.8 C6 6.8 7.5 8 7.5 11 Z" fill="#555"/></svg>
<svg class="ic" style="left:689px;top:71.5px" width="10" height="9" viewBox="0 0 10 9"><path d="M0.3 1 L0.9 1.6 L2 0.4 M0.3 4.3 L0.9 4.9 L2 3.7" stroke="#666" stroke-width="0.7" fill="none"/><rect x="0.4" y="7" width="1.3" height="1.3" fill="#777"/><path d="M3.5 1.2 H9.5 M3.5 4.5 H9.5 M3.5 7.8 H9.5" stroke="#555" stroke-width="1.1"/></svg>
<svg class="ic" style="left:717px;top:70px" width="11" height="12" viewBox="0 0 11 12"><path d="M3.5 6.5 L7.5 1.8 C8.3 0.9 9.8 1.1 10 2.2 C10.2 3 9.8 3.5 9.3 4.1 L4.5 9.8 C3.7 10.8 2 11 1.2 10.2 C0.4 9.3 0.7 8 1.5 7 L6.5 1.3 M3.8 8 L8 3.2" stroke="#666" stroke-width="1" fill="none"/></svg>
<svg class="ic" style="left:745.5px;top:72px" width="10" height="8" viewBox="0 0 10 8"><rect x="0" y="0.3" width="9.6" height="7.5" rx="0.5" fill="#5a5a5a"/><rect x="1" y="2.4" width="7.6" height="0.9" fill="#bdbdbd"/><rect x="3.4" y="5.3" width="2.8" height="2.5" fill="#cfcfcf"/></svg>
<svg class="ic" style="left:773.5px;top:71px" width="10" height="10" viewBox="0 0 10 10"><path d="M0.6 0.5 V9.3 H9.5" stroke="#666" stroke-width="0.9" fill="none"/><path d="M1.5 6.8 L3.8 3.2 L5.6 4.8 L9 1" stroke="#555" stroke-width="1" fill="none"/></svg>
<svg class="ic" style="left:801.5px;top:70px" width="12" height="12" viewBox="0 0 12 12"><path d="M6.4 6.2 L4.7 1.7 M6.4 6.2 L10.7 1.7 M6.4 6.2 L1.8 5 M6.4 6.2 L3.3 10.1 M6.4 6.2 L10.5 8.6" stroke="#666" stroke-width="0.7"/><circle cx="4.7" cy="1.7" r="1.1" fill="#555"/><circle cx="10.7" cy="1.7" r="1.1" fill="#555"/><circle cx="1.8" cy="5" r="1.1" fill="#555"/><circle cx="3.3" cy="10.1" r="1.1" fill="#555"/><circle cx="10.5" cy="8.6" r="1.1" fill="#555"/><circle cx="6.4" cy="6.2" r="1.3" stroke="#555" stroke-width="0.9" fill="#fff"/></svg>
<svg class="ic" style="left:831px;top:72px" width="10" height="9" viewBox="0 0 10 9"><path d="M0 0 H9.6 V6.3 H3.6 L2 8.2 V6.3 H0 Z" fill="#5a5a5a"/><rect x="1.9" y="2.5" width="1.4" height="1.4" fill="#fff"/><rect x="4.2" y="2.5" width="1.4" height="1.4" fill="#fff"/><rect x="6.5" y="2.5" width="1.4" height="1.4" fill="#fff"/></svg>
<svg class="ic" style="left:858.5px;top:71px" width="10" height="10" viewBox="0 0 10 10"><path d="M1.5 3 C2.3 1.5 3.6 0.7 5.2 0.7 C7.6 0.7 9.4 2.6 9.4 5 C9.4 7.4 7.5 9.3 5.1 9.3 C2.8 9.3 1.1 7.6 0.9 5.5" stroke="#5a5a5a" stroke-width="1" fill="none"/><path d="M0.4 1.2 L1.3 3.6 L3.6 2.8" stroke="#5a5a5a" stroke-width="0.9" fill="none"/><path d="M5 2.6 V5.2 L6.9 6.6" stroke="#5a5a5a" stroke-width="1" fill="none"/></svg>
<svg class="ic" style="left:935px;top:75px" width="6" height="4" viewBox="0 0 6 4"><path d="M0.5 0.5 L3 3 L5.5 0.5" stroke="#666" stroke-width="0.9" fill="none"/></svg>
<div class="a" style="left:597px;top:88px;width:350px;height:1px;background:#e6e6e6"></div>
<!-- FORM -->
<div class="a" style="left:594px;top:97px;font-size:4.85px;font-weight:bold;color:#555;white-space:nowrap"><span style="color:#e8792f;font-weight:normal">*</span>&nbsp;Indicates required fields</div>
<div class="lbl" style="top:111px">Title <span style="color:#e8792f;font-weight:normal">*</span></div>
<div class="box" style="top:120px;height:28px"></div>
<div class="val" style="left:601px;top:127px;color:#555">TS6- CAN bus DoS</div>
<div class="lbl" style="top:155px">Name</div>
<div class="val" style="top:165px">R-0000008</div>
<div class="lbl" style="top:181px">Root Cause</div>
<div class="box" style="top:190px;height:30px"></div>
<div class="val" style="left:601px;top:197px">Attack of Bluetooth interface</div>
<div class="lbl" style="top:227px">Description</div>
<div class="box" style="top:236px;height:30px"></div>
<div class="val" style="left:601px;top:243px">Deny of Service for CAN bus</div>
<div class="lbl" style="top:273px">Context</div>
<div class="box" style="top:283px;height:23px;border-color:#a8a8a8"></div>
<div class="a" style="left:596px;top:285px;width:350px;height:19px;border:1px solid #e0e0e0;border-radius:1px"></div>
<svg class="ic" style="left:602px;top:290px" width="9" height="8" viewBox="0 0 9 8"><circle cx="2.5" cy="2.5" r="1.1" fill="#4f7f92"/><circle cx="5.5" cy="5.6" r="1.1" fill="#4f7f92"/><circle cx="0.9" cy="4.2" r="0.9" fill="#a9b4bb"/><circle cx="7" cy="2.3" r="0.8" fill="#b9c3c9"/><circle cx="2.8" cy="6.3" r="0.8" fill="#b9c3c9"/></svg>
<div class="val" style="left:615px;top:290px;color:#444">ISO21434 Headlamp Sample-T1</div>
<svg class="ic" style="left:932px;top:292px" width="6" height="4" viewBox="0 0 6 4"><path d="M0.5 0.5 L3 3 L5.5 0.5" stroke="#444" stroke-width="1" fill="none"/></svg>
<div class="a" style="left:923px;top:273px;width:24px;height:12px;background:#f4f4f4;border:1px solid #dcdcdc;border-radius:2px;font-size:5.8px;color:#555;text-align:center;line-height:10px">Menu</div><svg class="ic" style="left:932px;top:284.5px" width="6" height="3" viewBox="0 0 6 3"><path d="M0 0 L3 2.5 L6 0 Z" fill="#f4f4f4"/><path d="M0 0 L3 2.5 L6 0" stroke="#dcdcdc" stroke-width="0.8" fill="none"/></svg>
<div class="lbl" style="top:312px">Matrix Configuration</div>
<div class="val" style="top:322px">Default Risk Matrix Configuration</div>
<div class="lbl" style="top:338px">Effective Date <span style="color:#e8792f;font-weight:normal">*</span></div>
<div class="box" style="top:347px;height:20px"></div>
<div class="val" style="left:601px;top:353px">Sep 25, 2025</div>
<svg class="ic" style="left:933px;top:352.5px" width="9" height="9" viewBox="0 0 9 9"><rect x="0.5" y="2" width="8" height="6.5" stroke="#666" stroke-width="0.9" fill="none"/><rect x="0.3" y="1.8" width="8.4" height="2.2" fill="#666"/><rect x="1.5" y="0.3" width="1.6" height="2" fill="#666"/><rect x="5.9" y="0.3" width="1.6" height="2" fill="#666"/><path d="M2 6 H7" stroke="#bbb" stroke-width="0.6"/></svg>
<div class="lbl" style="top:374px">Impact <span style="color:#e8792f;font-weight:normal">*</span></div>
<div class="box" style="top:383px;height:20px"></div>
<div class="a" style="left:927px;top:384px;width:19px;height:18px;background:#f4f4f4;border-left:1px solid #cfcfcf"></div>
<svg class="ic" style="left:934px;top:391px" width="6" height="5" viewBox="0 0 6 5"><path d="M0 0.5 H6 L3 4 Z" fill="#333"/></svg>
<div class="val" style="left:601px;top:390px">5-High</div>
<div class="lbl" style="top:410px">Probability <span style="color:#e8792f;font-weight:normal">*</span></div>
<div class="box" style="top:419px;height:20px"></div>
<div class="a" style="left:927px;top:420px;width:19px;height:18px;background:#f4f4f4;border-left:1px solid #cfcfcf"></div>
<svg class="ic" style="left:934px;top:427px" width="6" height="5" viewBox="0 0 6 5"><path d="M0 0.5 H6 L3 4 Z" fill="#333"/></svg>
<div class="val" style="left:601px;top:426px">5-Almost Certain</div>
<div class="lbl" style="top:445px">Rating</div>
<div class="val" style="top:455px">25</div>
<div class="lbl" style="top:470px">Severity</div>
<div class="val" style="top:480px">3-High</div>
<div class="a" style="left:587px;top:490px;width:366px;height:12px;overflow:hidden"><div class="lbl" style="left:8px;top:6px">Impact Goal</div></div>
<!-- INFO ICONS -->
<svg class="ic" style="left:638.0px;top:181.0px" width="7" height="7" viewBox="0 0 7 7"><circle cx="3.5" cy="3.5" r="3.5" fill="#6e6e6e"/><rect x="3" y="3" width="1.1" height="2.6" fill="#fff"/><circle cx="3.55" cy="1.9" r="0.6" fill="#fff"/></svg>
<svg class="ic" style="left:624.5px;top:273.2px" width="7" height="7" viewBox="0 0 7 7"><circle cx="3.5" cy="3.5" r="3.5" fill="#6e6e6e"/><rect x="3" y="3" width="1.1" height="2.6" fill="#fff"/><circle cx="3.55" cy="1.9" r="0.6" fill="#fff"/></svg>
<svg class="ic" style="left:667.1px;top:312.3px" width="7" height="7" viewBox="0 0 7 7"><circle cx="3.5" cy="3.5" r="3.5" fill="#6e6e6e"/><rect x="3" y="3" width="1.1" height="2.6" fill="#fff"/><circle cx="3.55" cy="1.9" r="0.6" fill="#fff"/></svg>
<svg class="ic" style="left:650.4px;top:338.0px" width="7" height="7" viewBox="0 0 7 7"><circle cx="3.5" cy="3.5" r="3.5" fill="#6e6e6e"/><rect x="3" y="3" width="1.1" height="2.6" fill="#fff"/><circle cx="3.55" cy="1.9" r="0.6" fill="#fff"/></svg>
<svg class="ic" style="left:626.5px;top:373.8px" width="7" height="7" viewBox="0 0 7 7"><circle cx="3.5" cy="3.5" r="3.5" fill="#6e6e6e"/><rect x="3" y="3" width="1.1" height="2.6" fill="#fff"/><circle cx="3.55" cy="1.9" r="0.6" fill="#fff"/></svg>
<svg class="ic" style="left:640.5px;top:409.9px" width="7" height="7" viewBox="0 0 7 7"><circle cx="3.5" cy="3.5" r="3.5" fill="#6e6e6e"/><rect x="3" y="3" width="1.1" height="2.6" fill="#fff"/><circle cx="3.55" cy="1.9" r="0.6" fill="#fff"/></svg>
<svg class="ic" style="left:620.7px;top:445.0px" width="7" height="7" viewBox="0 0 7 7"><circle cx="3.5" cy="3.5" r="3.5" fill="#6e6e6e"/><rect x="3" y="3" width="1.1" height="2.6" fill="#fff"/><circle cx="3.55" cy="1.9" r="0.6" fill="#fff"/></svg>
<svg class="ic" style="left:626.0px;top:470.0px" width="7" height="7" viewBox="0 0 7 7"><circle cx="3.5" cy="3.5" r="3.5" fill="#6e6e6e"/><rect x="3" y="3" width="1.1" height="2.6" fill="#fff"/><circle cx="3.55" cy="1.9" r="0.6" fill="#fff"/></svg>
<svg class="ic" style="left:638.9px;top:495.5px" width="7" height="7" viewBox="0 0 7 7"><circle cx="3.5" cy="3.5" r="3.5" fill="#6e6e6e"/><rect x="3" y="3" width="1.1" height="2.6" fill="#fff"/><circle cx="3.55" cy="1.9" r="0.6" fill="#fff"/></svg>
<!-- FOOTER -->
<div class="a" style="left:587px;top:502px;width:367px;height:31px;background:#f0f0f0"></div>
<div class="a" style="left:912px;top:509px;width:36px;height:19px;background:#fff;border:1px solid #cfcfcf;border-radius:2px;font-size:7px;color:#444;text-align:center;line-height:17px">Close</div>
<!-- POPUPS -->
<div class="a" style="left:773px;top:307px;width:84px;height:39px;background:#fff;border:1px solid #e0e0e0;box-shadow:0 1px 2px rgba(0,0,0,0.12)"></div>
<div class="a" style="left:774px;top:308px;width:82px;height:20px;background:#eeeeee"></div>
<svg class="ic" style="left:777px;top:311px" width="13" height="13" viewBox="0 0 13 13"><defs><linearGradient id="catg" x1="0" y1="0" x2="1" y2="1"><stop offset="0" stop-color="#5c9cbd"/><stop offset="1" stop-color="#3b6f88"/></linearGradient></defs><rect x="1.5" y="3" width="10.5" height="9" fill="url(#catg)"/><circle cx="3" cy="3" r="2" fill="#4f8fb0"/><path d="M2.5 4 L10.5 11.5 M10.5 5 L6 10" stroke="#cfe5f0" stroke-width="0.8"/></svg>
<div class="a" style="left:792px;top:314px;font-size:5.2px;color:#444;white-space:nowrap">Design with CATIA Magic</div>
<svg class="ic" style="left:781px;top:333px" width="7" height="7" viewBox="0 0 7 7"><path d="M3.5 0 V7 M0 3.5 H7" stroke="#555" stroke-width="1"/></svg>
<div class="a" style="left:795px;top:333.5px;font-size:5.2px;color:#666;white-space:nowrap">More Apps</div>
<div class="a" style="left:857px;top:304px;width:81px;height:47px;background:#fff;border:1px solid #e0e0e0;box-shadow:0 1px 2px rgba(0,0,0,0.12)"></div>
<div class="a" style="left:858px;top:327px;width:79px;height:1px;background:#ececec"></div>
<svg class="ic" style="left:867px;top:311px" width="8" height="9" viewBox="0 0 8 9"><path d="M0.5 1 C3 1 5.5 2 5.5 5 L5.5 3.5 M3.5 5 L5.5 8 L7.5 5 Z" stroke="#444" stroke-width="1" fill="#444"/></svg>
<div class="a" style="left:884px;top:312px;font-size:6.5px;color:#333;white-space:nowrap">Open</div>
<div class="a" style="left:867px;top:334px;width:8px;height:8px;border:1px solid #ddd;background:#f4f4f4"></div>
<div class="a" style="left:884px;top:334px;font-size:6.5px;color:#aaa;white-space:nowrap">Properties</div>

</body></html>
